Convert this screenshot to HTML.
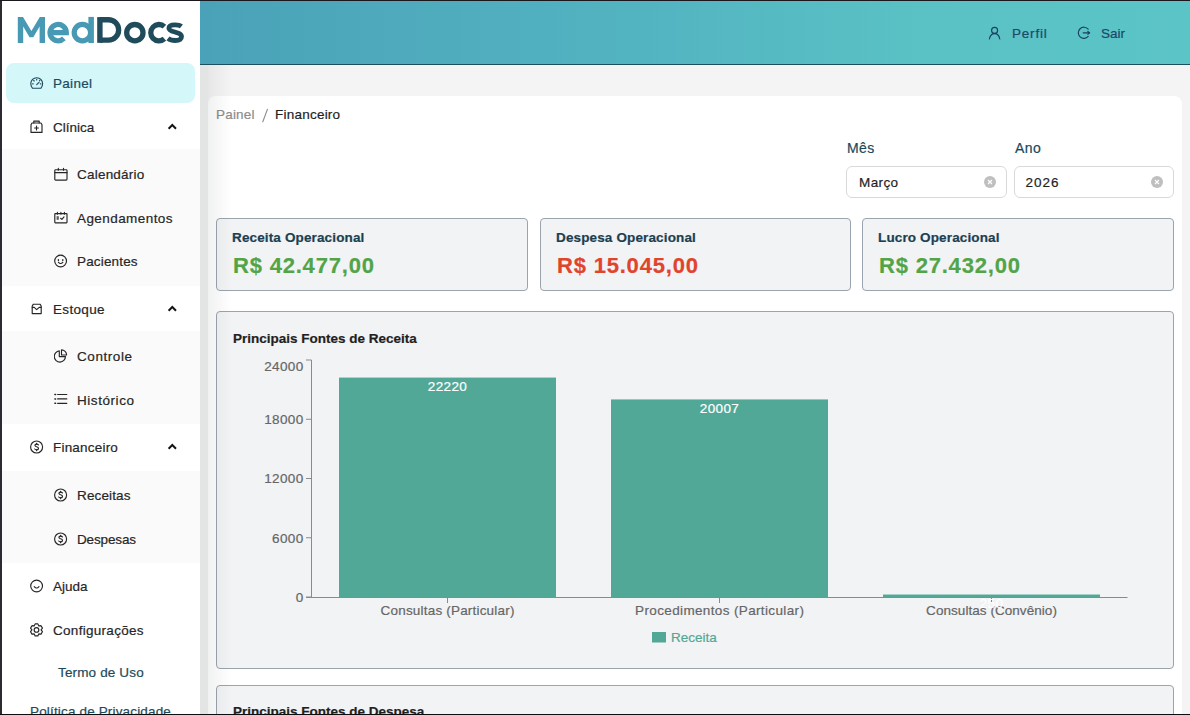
<!DOCTYPE html>
<html><head><meta charset="utf-8">
<style>
*{box-sizing:border-box;margin:0;padding:0}
html,body{width:1190px;height:715px;overflow:hidden;background:#fff;font-family:"Liberation Sans",sans-serif}
.abs{position:absolute}
#frameL{left:0;top:0;width:2px;height:715px;background:#2c2b30;z-index:50}
#frameT{left:0;top:0;width:1190px;height:1px;background:#1a181c;z-index:50}
#frameB{left:0;top:714px;width:1190px;height:1px;background:#0e0d10;z-index:50}
#sidebar{left:0;top:0;width:200px;height:715px;background:#fff;overflow:hidden}
.sub{position:absolute;left:2px;width:198px;background:#fafafa}
#header{left:200px;top:0;width:990px;height:65px;background:linear-gradient(90deg,#4aa2b8 0%,#53b4c1 45%,#5ac2c5 75%,#5bc4c6 100%);border-bottom:1px solid #1e4f5c}
#main{left:200px;top:65px;width:990px;height:650px;background:#f4f4f4}
#shade{left:200px;top:65px;width:8px;height:650px;background:#e3e5e4;z-index:5}
#shade2{left:208px;top:65px;width:24px;height:650px;background:linear-gradient(90deg,rgba(30,40,40,0.065) 0,rgba(30,40,40,0.055) 3px,rgba(0,0,0,0.03) 10px,rgba(0,0,0,0) 24px);z-index:5}
#card{left:208px;top:96px;width:974px;height:640px;background:#fff;border-radius:8px}
.kpi{position:absolute;top:218px;height:73px;background:#f2f3f5;border:1px solid #9ba3ae;border-radius:4px}
.kpi .t{position:absolute;left:15px;top:9px;height:20px;line-height:20px;font-size:13.5px;letter-spacing:0.14px;font-weight:bold;color:#1b3f50;white-space:nowrap}
.kpi .v{position:absolute;left:16px;top:32px;height:30px;line-height:30px;font-size:22px;letter-spacing:0.8px;font-weight:bold;white-space:nowrap}
.panel{position:absolute;left:216px;width:958px;background:#f2f3f5;border:1px solid #9ba3ae;border-radius:4px}
.lbl{font-size:14px;letter-spacing:0.4px;color:#174a5c}
.inp{position:absolute;top:166px;height:32px;background:#fff;border:1px solid #d9d9d9;border-radius:6px}
.inp span{position:absolute;left:12px;top:1px;line-height:30px;font-size:13.5px;color:#1f1f1f}
svg text{font-family:"Liberation Sans",sans-serif}
body div{-webkit-text-stroke:0.2px currentColor}
</style></head><body>
<div id="frameL" class="abs"></div><div id="frameT" class="abs"></div><div id="frameB" class="abs"></div>
<div id="sidebar" class="abs">
<svg class="abs" style="left:0;top:0" width="200" height="60" viewBox="0 0 200 60">
<g fill="#4899b3"><path d="M17.8 43 V16.9 H23 L31.4 31 L39.8 16.9 H45 V43 H39.6 V26.5 L33.3 37.2 H29.5 L23.2 26.5 V43 Z"/></g>
<g fill="none" stroke="#4899b3" stroke-width="5.2">
<path d="M50.2 32.6 H66.3 A8.15 8.15 0 1 0 63.9 38.4" stroke-linecap="butt"/>
<circle cx="82.4" cy="32.6" r="8.2"/>
</g>
<rect x="88.4" y="16.9" width="5.5" height="26.1" fill="#4899b3"/>
<g fill="none" stroke="#1f4b5b" stroke-width="5.3">
<path d="M99.9 19.75 H108.45 A10.2 10.2 0 0 1 108.45 40.15 H99.9"/>
<circle cx="134.85" cy="32.65" r="8.15"/>
<path d="M164.4 26.6 A8.15 8.15 0 1 0 164.4 38.7"/>
<path d="M181.4 26.3 C179.8 25 177.6 24.8 175 24.8 C171.2 24.8 168.9 26 168.9 28.3 C168.9 32.8 181.5 31.2 181.5 36.6 C181.5 39.2 178.8 40.5 175.2 40.5 C172.2 40.5 169.7 39.7 168 38.3" stroke-width="4.8"/>
</g>
<rect x="97.2" y="17.1" width="5.4" height="25.7" fill="#1f4b5b"/>
</svg>
<div class="abs" style="left:6px;top:63px;width:189px;height:40px;background:#d4f7fa;border-radius:8px"></div>
<div class="sub" style="top:149px;height:137px"></div>
<div class="sub" style="top:331px;height:93px"></div>
<div class="sub" style="top:471px;height:92px"></div>
<svg class="abs" style="left:30px;top:76px" width="14" height="14" viewBox="0 0 14 14" fill="none" stroke="#1d4a5a" stroke-width="1.15" stroke-linecap="round" stroke-linejoin="round"><path d="M2.4 12.2 Q0.8 10.4 0.8 7.6 A5.9 5.9 0 0 1 12.6 7.6 Q12.6 10.4 11 12.2 Z"/><path d="M6.7 8.6 L9 6.4"/><path d="M6.7 3.2 V3.9 M3.7 4.5 L4.2 5 M2.6 7.8 H3.2 M10.3 7.8 H10.9 M9.9 4.3 L9.5 4.8"/></svg>
<div class="abs" style="left:53px;top:63.5px;height:40px;line-height:40px;font-size:13.5px;color:#1d4a5a;white-space:nowrap;font-weight:normal;letter-spacing:0.3px">Painel</div>
<svg class="abs" style="left:30px;top:120px" width="14" height="14" viewBox="0 0 14 14" fill="none" stroke="#262626" stroke-width="1.15" stroke-linecap="round" stroke-linejoin="round"><path d="M1 12.4 V4.7 L2 3 H11 L12 4.7 V12.4 Z"/><path d="M3.8 3 V1.1 H9.2 V3"/><path d="M6.5 6.1 V9.9 M4.6 8 H8.4"/></svg>
<div class="abs" style="left:53px;top:107.5px;height:40px;line-height:40px;font-size:13.5px;color:#262626;white-space:nowrap;font-weight:normal;letter-spacing:0px">Clínica</div>
<svg class="abs" style="left:30px;top:302px" width="14" height="14" viewBox="0 0 14 14" fill="none" stroke="#262626" stroke-width="1.15" stroke-linecap="round" stroke-linejoin="round"><path d="M2.2 11.6 V4.6 Q2.2 3.9 2.6 3.3 L3.4 2.2 H10 L10.8 3.3 Q11.2 3.9 11.2 4.6 V11.6 Z"/><path d="M2.3 5.4 H4.2 L6.7 7.6 L9.2 5.4 H11.1"/></svg>
<div class="abs" style="left:53px;top:289.5px;height:40px;line-height:40px;font-size:13.5px;color:#262626;white-space:nowrap;font-weight:normal;letter-spacing:0.33px">Estoque</div>
<svg class="abs" style="left:30px;top:440px" width="14" height="14" viewBox="0 0 14 14" fill="none" stroke="#262626" stroke-width="1.15" stroke-linecap="round" stroke-linejoin="round"><circle cx="6.6" cy="7" r="6"/><path d="M8.4 4.9 Q7.9 4.1 6.6 4.1 Q4.9 4.1 4.9 5.3 Q4.9 6.4 6.6 6.8 Q8.5 7.2 8.5 8.5 Q8.5 9.8 6.6 9.8 Q5.3 9.8 4.7 9"/><path d="M6.6 3.3 V4.1 M6.6 9.8 V10.7"/></svg>
<div class="abs" style="left:53px;top:427.5px;height:40px;line-height:40px;font-size:13.5px;color:#262626;white-space:nowrap;font-weight:normal;letter-spacing:0.2px">Financeiro</div>
<svg class="abs" style="left:30px;top:579px" width="14" height="14" viewBox="0 0 14 14" fill="none" stroke="#262626" stroke-width="1.15" stroke-linecap="round" stroke-linejoin="round"><circle cx="6.6" cy="7" r="5.9"/><path d="M4.2 7.6 Q6.6 10.4 9 7.6"/></svg>
<div class="abs" style="left:53px;top:566.5px;height:40px;line-height:40px;font-size:13.5px;color:#262626;white-space:nowrap;font-weight:normal;letter-spacing:0px">Ajuda</div>
<svg class="abs" style="left:30px;top:623px" width="14" height="14" viewBox="0 0 14 14" fill="none" stroke="#262626" stroke-width="1.15" stroke-linecap="round" stroke-linejoin="round"><path d="M5.11 0.86 L7.89 0.86 L8.80 2.92 L11.03 2.67 L12.43 5.09 L11.10 6.90 L12.43 8.71 L11.03 11.13 L8.80 10.88 L7.89 12.94 L5.11 12.94 L4.20 10.88 L1.97 11.13 L0.57 8.71 L1.90 6.90 L0.57 5.09 L1.97 2.67 L4.20 2.92 Z"/><circle cx="6.5" cy="6.9" r="2.35"/></svg>
<div class="abs" style="left:53px;top:610.5px;height:40px;line-height:40px;font-size:13.5px;color:#262626;white-space:nowrap;font-weight:normal;letter-spacing:0.29px">Configurações</div>
<svg class="abs" style="left:164px;top:120px" width="16" height="12" viewBox="0 0 16 12"><path d="M4.6 8.7 L8.3 5 L12 8.7" fill="none" stroke="#141414" stroke-width="2" stroke-linecap="butt" stroke-linejoin="miter"/></svg>
<svg class="abs" style="left:164px;top:302px" width="16" height="12" viewBox="0 0 16 12"><path d="M4.6 8.7 L8.3 5 L12 8.7" fill="none" stroke="#141414" stroke-width="2" stroke-linecap="butt" stroke-linejoin="miter"/></svg>
<svg class="abs" style="left:164px;top:440px" width="16" height="12" viewBox="0 0 16 12"><path d="M4.6 8.7 L8.3 5 L12 8.7" fill="none" stroke="#141414" stroke-width="2" stroke-linecap="butt" stroke-linejoin="miter"/></svg>
<svg class="abs" style="left:54px;top:167px" width="14" height="14" viewBox="0 0 14 14" fill="none" stroke="#262626" stroke-width="1.15" stroke-linecap="round" stroke-linejoin="round"><rect x="0.8" y="2.7" width="12.2" height="10.4" rx="0.8"/><path d="M0.8 5.6 H13"/><path d="M4.3 1.4 V3.2 M9.5 1.4 V3.2"/></svg>
<div class="abs" style="left:77px;top:154.5px;height:40px;line-height:40px;font-size:13.5px;color:#262626;white-space:nowrap;font-weight:normal;letter-spacing:0.22px">Calendário</div>
<svg class="abs" style="left:54px;top:211px" width="14" height="14" viewBox="0 0 14 14" fill="none" stroke="#262626" stroke-width="1.15" stroke-linecap="round" stroke-linejoin="round"><rect x="0.8" y="2.6" width="12.2" height="9.2" rx="0.5"/><path d="M3.4 1.4 V3.2 M6.9 1.4 V3.2 M10.4 1.4 V3.2"/><rect x="2.6" y="5.2" width="2.2" height="3.6" fill="#262626" stroke="none" opacity="0.75"/><path d="M6.6 7.3 L7.9 8.4 L10 5.9"/></svg>
<div class="abs" style="left:77px;top:198.5px;height:40px;line-height:40px;font-size:13.5px;color:#262626;white-space:nowrap;font-weight:normal;letter-spacing:0.43px">Agendamentos</div>
<svg class="abs" style="left:54px;top:254px" width="14" height="14" viewBox="0 0 14 14" fill="none" stroke="#262626" stroke-width="1.15" stroke-linecap="round" stroke-linejoin="round"><circle cx="6.6" cy="7" r="5.9"/><path d="M4.4 8.4 Q6.6 10.6 8.8 8.4"/><path d="M4.4 5.6 V6.6 M8.8 5.6 V6.6" stroke-width="1.3"/></svg>
<div class="abs" style="left:77px;top:241.5px;height:40px;line-height:40px;font-size:13.5px;color:#262626;white-space:nowrap;font-weight:normal;letter-spacing:0.16px">Pacientes</div>
<svg class="abs" style="left:54px;top:349px" width="14" height="14" viewBox="0 0 14 14" fill="none" stroke="#262626" stroke-width="1.15" stroke-linecap="round" stroke-linejoin="round"><path d="M5.3 1.9 A5.6 5.6 0 1 0 11.5 7.6 H5.3 Z"/><path d="M7.5 0.9 A5.1 5.1 0 0 1 12.6 6 H7.5 Z"/></svg>
<div class="abs" style="left:77px;top:336.5px;height:40px;line-height:40px;font-size:13.5px;color:#262626;white-space:nowrap;font-weight:normal;letter-spacing:0.57px">Controle</div>
<svg class="abs" style="left:54px;top:393px" width="14" height="14" viewBox="0 0 14 14" fill="none" stroke="#262626" stroke-width="1.15" stroke-linecap="round" stroke-linejoin="round"><path d="M3.6 1.5 H12.8 M3.6 5.9 H12.8 M3.6 10.3 H12.8"/><path d="M0.9 1.5 H1.6 M0.9 5.9 H1.6 M0.9 10.3 H1.6" stroke-width="1.5"/></svg>
<div class="abs" style="left:77px;top:380.5px;height:40px;line-height:40px;font-size:13.5px;color:#262626;white-space:nowrap;font-weight:normal;letter-spacing:0.56px">Histórico</div>
<svg class="abs" style="left:54px;top:488px" width="14" height="14" viewBox="0 0 14 14" fill="none" stroke="#262626" stroke-width="1.15" stroke-linecap="round" stroke-linejoin="round"><circle cx="6.6" cy="7" r="6"/><path d="M8.4 4.9 Q7.9 4.1 6.6 4.1 Q4.9 4.1 4.9 5.3 Q4.9 6.4 6.6 6.8 Q8.5 7.2 8.5 8.5 Q8.5 9.8 6.6 9.8 Q5.3 9.8 4.7 9"/><path d="M6.6 3.3 V4.1 M6.6 9.8 V10.7"/></svg>
<div class="abs" style="left:77px;top:475.5px;height:40px;line-height:40px;font-size:13.5px;color:#262626;white-space:nowrap;font-weight:normal;letter-spacing:0.14px">Receitas</div>
<svg class="abs" style="left:54px;top:532px" width="14" height="14" viewBox="0 0 14 14" fill="none" stroke="#262626" stroke-width="1.15" stroke-linecap="round" stroke-linejoin="round"><circle cx="6.6" cy="7" r="6"/><path d="M8.4 4.9 Q7.9 4.1 6.6 4.1 Q4.9 4.1 4.9 5.3 Q4.9 6.4 6.6 6.8 Q8.5 7.2 8.5 8.5 Q8.5 9.8 6.6 9.8 Q5.3 9.8 4.7 9"/><path d="M6.6 3.3 V4.1 M6.6 9.8 V10.7"/></svg>
<div class="abs" style="left:77px;top:519.5px;height:40px;line-height:40px;font-size:13.5px;color:#262626;white-space:nowrap;font-weight:normal;letter-spacing:-0.14px">Despesas</div>
<div class="abs" style="left:58px;top:652.5px;height:40px;line-height:40px;font-size:13.5px;color:#1d4a5a;white-space:nowrap;font-weight:normal;letter-spacing:0.15px">Termo de Uso</div>
<div class="abs" style="left:30px;top:691.5px;height:40px;line-height:40px;font-size:13.5px;color:#1d4a5a;white-space:nowrap;font-weight:normal;letter-spacing:0.16px">Política de Privacidade</div>
</div>
<div id="header" class="abs"></div>
<svg class="abs" style="left:988px;top:26px" width="14" height="14" viewBox="0 0 14 14" fill="none" stroke="#183f5e" stroke-width="1.15" stroke-linecap="round" stroke-linejoin="round"><circle cx="6.6" cy="4.4" r="3"/><path d="M1.4 13 Q2.4 7.6 6.6 7.6 Q10.8 7.6 11.8 13"/></svg>
<div class="abs" style="left:1012px;top:14px;height:40px;line-height:40px;font-size:13.5px;letter-spacing:0.8px;color:#1d4868">Perfil</div>
<svg class="abs" style="left:1077px;top:26px" width="14" height="14" viewBox="0 0 14 14" fill="none" stroke="#183f5e" stroke-width="1.15" stroke-linecap="round" stroke-linejoin="round"><path d="M11.2 3.2 A5.6 5.6 0 1 0 11.2 10.4"/><path d="M6.2 6.8 H12.6"/><path d="M10.8 5.4 L12.4 6.8 L10.8 8.2"/></svg>
<div class="abs" style="left:1101px;top:14px;height:40px;line-height:40px;font-size:13.5px;color:#1d4868">Sair</div>
<div id="main" class="abs"></div>
<div id="card" class="abs"></div>
<div class="abs" style="left:216px;top:105px;height:20px;line-height:20px;font-size:13.5px;letter-spacing:0.2px;color:#8c8c8c">Painel</div>
<svg class="abs" style="left:255px;top:104px" width="20" height="22" viewBox="255 104 20 22"><path d="M262.8 121.8 L267.4 109.4" stroke="#8f8f8f" stroke-width="1.15" stroke-linecap="round"/></svg>
<div class="abs" style="left:275px;top:105px;height:20px;line-height:20px;font-size:13.5px;letter-spacing:0.23px;color:#1f1f1f">Financeiro</div>
<div class="abs lbl" style="left:847px;top:138px;height:20px;line-height:20px">Mês</div>
<div class="abs lbl" style="left:1015px;top:138px;height:20px;line-height:20px">Ano</div>
<div class="inp" style="left:846px;width:161px"><span style="letter-spacing:0.4px">Março</span><svg class="abs" style="right:10px;top:9px" width="12" height="12" viewBox="0 0 12 12"><circle cx="6" cy="6" r="6" fill="#bfbfbf"/><path d="M4 4 L8 8 M8 4 L4 8" stroke="#fff" stroke-width="1.1"/></svg></div>
<div class="inp" style="left:1014px;width:160px"><span style="left:10.5px;letter-spacing:1px">2026</span><svg class="abs" style="right:10px;top:9px" width="12" height="12" viewBox="0 0 12 12"><circle cx="6" cy="6" r="6" fill="#bfbfbf"/><path d="M4 4 L8 8 M8 4 L4 8" stroke="#fff" stroke-width="1.1"/></svg></div>
<div class="kpi" style="left:216px;width:312px"><div class="t">Receita Operacional</div><div class="v" style="color:#52a446">R$ 42.477,00</div></div>
<div class="kpi" style="left:540px;width:311px"><div class="t">Despesa Operacional</div><div class="v" style="color:#e0442c">R$ 15.045,00</div></div>
<div class="kpi" style="left:862px;width:312px"><div class="t">Lucro Operacional</div><div class="v" style="color:#52a446">R$ 27.432,00</div></div>
<div class="panel" style="top:311px;height:358px"></div>
<div class="panel" style="top:685px;height:60px"></div>
<div class="abs" style="left:233px;top:328.5px;height:20px;line-height:20px;font-size:13.5px;font-weight:bold;color:#1f1f1f">Principais Fontes de Receita</div>
<div class="abs" style="left:233px;top:702px;height:20px;line-height:20px;font-size:13.5px;font-weight:bold;color:#1f1f1f">Principais Fontes de Despesa</div>
<svg class="abs" style="left:0;top:0" width="1190" height="715" viewBox="0 0 1190 715">
<g fill="#52a896">
<rect x="339.0" y="377.58" width="217" height="219.42"/>
<rect x="611.0" y="399.43" width="217" height="197.57"/>
<rect x="883.0" y="594.53" width="217" height="2.47"/>
</g>
<g stroke="#8a8a8a" stroke-width="1" fill="none">
<path d="M311.5 360 V597 M306 597.5 H1127.5"/>
<path d="M306 360.00 H311.5"/>
<path d="M306 419.25 H311.5"/>
<path d="M306 478.50 H311.5"/>
<path d="M306 537.75 H311.5"/>
<path d="M306 597.00 H311.5"/>
<path d="M447.5 597.5 V603"/>
<path d="M719.5 597.5 V603"/>
<path d="M991.5 597.5 V603"/>
</g>
<g font-size="13.5" fill="#666" stroke="#666" stroke-width="0.2" text-anchor="end" style="letter-spacing:0.35px">
<text x="303.5" y="370.90">24000</text>
<text x="303.5" y="424.15">18000</text>
<text x="303.5" y="483.40">12000</text>
<text x="303.5" y="542.65">6000</text>
<text x="303.5" y="601.90">0</text>
</g>
<g font-size="13.5" fill="#666" stroke="#666" stroke-width="0.2" text-anchor="middle">
<text x="447.60" y="615" style="letter-spacing:0.19px">Consultas (Particular)</text>
<text x="719.68" y="615" style="letter-spacing:0.36px">Procedimentos (Particular)</text>
<text x="991.52" y="615" style="letter-spacing:0.05px">Consultas (Convênio)</text>
</g>
<g font-size="13.5" fill="#fff" stroke="#fff" stroke-width="0.2" text-anchor="middle" style="letter-spacing:0.35px">
<text x="447.5" y="391.08">22220</text>
<text x="719.5" y="412.93">20007</text>
<text x="991.5" y="608.03">250</text>
</g>
<rect x="652" y="632" width="14" height="10.5" fill="#52a896"/>
<text x="671" y="641.8" font-size="13.5" fill="#52a896" stroke="#52a896" stroke-width="0.2">Receita</text>
</svg>
<div id="shade" class="abs"></div><div id="shade2" class="abs"></div>
</body></html>
